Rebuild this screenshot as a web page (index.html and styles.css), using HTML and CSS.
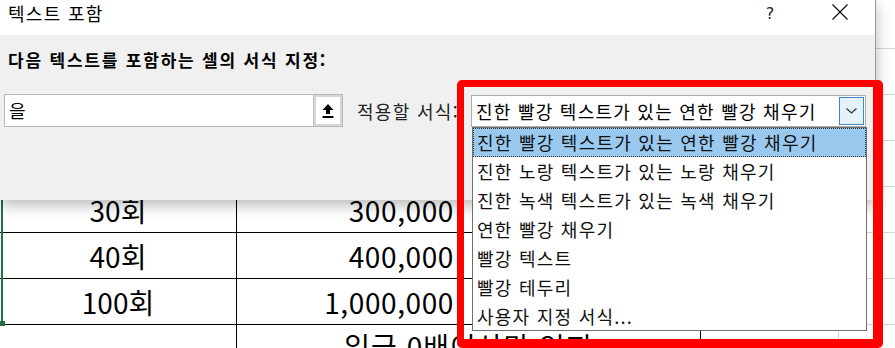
FILE: index.html
```html
<!DOCTYPE html>
<html lang="ko">
<head>
<meta charset="utf-8">
<link rel="stylesheet" href="styles.css">
</head>
<body>
<div class="sheet">
  <div class="row"><div class="c c1"></div><div class="c c2"></div><div class="c c3"></div><div class="c c4"></div><div class="c c5"></div></div>
  <div class="row"><div class="c c1"></div><div class="c c2"></div><div class="c c3"></div><div class="c c4"></div><div class="c c5"></div></div>
  <div class="row"><div class="c c1"></div><div class="c c2"></div><div class="c c3"></div><div class="c c4"></div><div class="c c5"></div></div>
  <div class="row"><div class="c c1 tb"></div><div class="c c2 tb"></div><div class="c c3 tb"></div><div class="c c4"></div><div class="c c5"></div></div>
  <div class="row"><div class="c c1 t mid">30회</div><div class="c c2 t num">300,000</div><div class="c c3 t"></div><div class="c c4"></div><div class="c c5"></div></div>
  <div class="row"><div class="c c1 t mid">40회</div><div class="c c2 t num">400,000</div><div class="c c3 t"></div><div class="c c4"></div><div class="c c5"></div></div>
  <div class="row"><div class="c c1 t mid">100회</div><div class="c c2 t num">1,000,000</div><div class="c c3 t"></div><div class="c c4"></div><div class="c c5"></div></div>
  <div class="row"><div class="c c1 t"></div><div class="c c23 t mid">입금 0배이상만 있지</div><div class="c c4"></div><div class="c c5"></div></div>
</div>
<div class="selection"></div>
<div class="handle"></div>

<div class="dialog">
  <div class="titlebar">
    <span class="title">텍스트 포함</span>
    <span class="capbtn help">?</span>
    <span class="capbtn close"><svg width="16" height="16" viewBox="0 0 16 16"><path d="M0.5 0.5 L15.5 15.5 M15.5 0.5 L0.5 15.5" stroke="#000" stroke-width="1.1" fill="none"/></svg></span>
  </div>
  <div class="dbody">
    <div class="prompt">다음 텍스트를 포함하는 셀의 서식 지정:</div>
    <div class="controls">
      <div class="refedit">
        <div class="refinput">을</div>
        <div class="refbtn"><svg width="14" height="16" viewBox="0 0 14 16"><path d="M7 1 L12.5 7 L9 7 L9 11 L5 11 L5 7 L1.5 7 Z" fill="#000"/><rect x="1.5" y="13" width="11" height="2" fill="#000"/></svg></div>
      </div>
      <span class="fmtlabel">적용할 서식:</span>
      <div class="combo">
        <span class="combotext">진한 빨강 텍스트가 있는 연한 빨강 채우기</span>
        <span class="ddbtn"><svg width="11" height="6" viewBox="0 0 11 6"><path d="M0.5 0.5 L5.5 5 L10.5 0.5" stroke="#333" stroke-width="1.2" fill="none"/></svg></span>
      </div>
    </div>
  </div>
</div>

<ul class="listbox">
  <li class="item selected">진한 빨강 텍스트가 있는 연한 빨강 채우기</li>
  <li class="item">진한 노랑 텍스트가 있는 노랑 채우기</li>
  <li class="item">진한 녹색 텍스트가 있는 녹색 채우기</li>
  <li class="item">연한 빨강 채우기</li>
  <li class="item">빨강 텍스트</li>
  <li class="item">빨강 테두리</li>
  <li class="item">사용자 지정 서식...</li>
</ul>

<div class="annot"></div>
</body>
</html>
```

FILE: styles.css
```css
* { box-sizing: border-box; }
html, body { margin: 0; padding: 0; }
body {
  width: 895px;
  height: 348px;
  overflow: hidden;
  background: #fff;
  position: relative;
  font-family: "Noto Sans CJK KR", "Noto Sans", sans-serif;
  color: #000;
}

/* spreadsheet */
.sheet { padding-top: 3px; }
.row { display: flex; height: 46px; }
.c {
  height: 46px;
  border-right: 1px solid #d4d4d4;
  border-bottom: 1px solid #d4d4d4;
  font-size: 28px;
  line-height: 1;
  display: flex;
  align-items: center;
  white-space: nowrap;
  overflow: hidden;
}
.c1 { width: 237px; }
.c2 { width: 224px; }
.c3 { width: 240px; }
.c23 { width: 464px; }
.c4 { width: 138px; }
.c5 { flex: 1; border-right: none; }
.tb { border-bottom-color: #000; }
.t { border-right-color: #000; border-bottom-color: #000; }
.mid { justify-content: center; }
.num { justify-content: flex-end; padding-right: 6px; letter-spacing: 0.6px; }
.c23.mid { align-items: flex-start; padding-top: 7px; letter-spacing: 1px; }

.selection {
  position: absolute;
  left: 1px;
  top: 150px;
  width: 2px;
  height: 173px;
  background: #217346;
}
.handle {
  position: absolute;
  left: 0;
  top: 321px;
  width: 5px;
  height: 5px;
  background: #217346;
}

/* dialog */
.dialog {
  position: absolute;
  left: 0;
  top: 0;
  width: 876px;
  height: 200px;
  background: #f0f0f0;
  border-right: 1px solid #9a9a9a;
  box-shadow: 0 5px 14px rgba(0, 0, 0, 0.28);
}
.titlebar {
  height: 35px;
  background: #fff;
  display: flex;
  align-items: flex-start;
}
.title {
  padding-left: 8px;
  font-size: 18px;
  letter-spacing: 1.3px;
  line-height: 26px;
  flex: 1;
}
.capbtn {
  width: 70px;
  height: 26px;
  display: flex;
  align-items: center;
  justify-content: center;
}
.help {
  font-family: "DejaVu Sans", sans-serif;
  font-size: 16px;
  color: #222;
}
.close svg { display: block; margin-top: -2px; }

.dbody { padding: 13px 9px 0 4px; }
.prompt {
  padding-left: 4px;
  font-size: 17px;
  letter-spacing: 1.8px;
  font-weight: bold;
  line-height: 24px;
}
.controls {
  margin-top: 22px;
  display: flex;
  align-items: center;
  height: 33px;
}
.refedit {
  width: 339px;
  height: 33px;
  display: flex;
  border: 1px solid #b8b8b8;
  background: #fff;
}
.refinput {
  flex: 1;
  font-size: 18px;
  line-height: 31px;
  padding-left: 4px;
}
.refbtn {
  width: 29px;
  border-left: 1px solid #c4c4c4;
  background: #fff;
  box-shadow: inset 0 0 0 2px #d6d6d6;
  display: flex;
  align-items: center;
  justify-content: center;
}
.fmtlabel {
  margin-left: 14px;
  font-size: 18px;
  letter-spacing: 1.3px;
  color: #222;
}
.combo {
  margin-left: auto;
  width: 395px;
  height: 32px;
  background: #fff;
  border: 1px solid #adadad;
  display: flex;
  align-items: center;
  padding-left: 4px;
}
.combotext {
  flex: 1;
  font-size: 18px;
  letter-spacing: 1.25px;
  white-space: nowrap;
}
.ddbtn {
  width: 25px;
  height: 28px;
  margin-right: 1px;
  background: #e5f1fb;
  border: 1px solid #3c88c8;
  display: flex;
  align-items: center;
  justify-content: center;
}

/* dropdown list */
.listbox {
  position: absolute;
  left: 472px;
  top: 127px;
  width: 395px;
  height: 204px;
  margin: 0;
  padding: 0;
  list-style: none;
  background: #fff;
  border: 1px solid #707070;
}
.item {
  height: 29px;
  line-height: 27px;
  padding-left: 3px;
  border: 1px solid transparent;
  font-size: 18px;
  letter-spacing: 1.25px;
  color: #111;
  white-space: nowrap;
}
.item.selected {
  background: #99c9ef;
  border: 1px dotted #333;
}

/* annotation */
.annot {
  position: absolute;
  left: 457px;
  top: 80px;
  width: 426px;
  height: 268px;
  border-style: solid;
  border-color: #ff0000;
  border-width: 7px 10px 9px 7px;
  border-radius: 5px;
}
```
